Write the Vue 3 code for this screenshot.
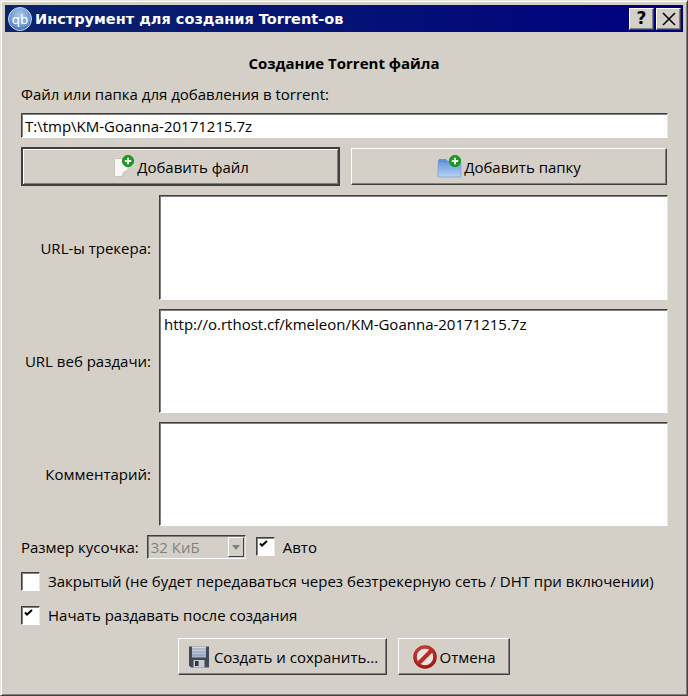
<script setup>
const areas = [
  { label: 'URL-ы трекера:', value: '' },
  { label: 'URL веб раздачи:', value: 'http://o.rthost.cf/kmeleon/KM-Goanna-20171215.7z' },
  { label: 'Комментарий:', value: '' }
]
</script>

<template>
  <div class="window">
    <div class="titlebar">
      <svg class="logo" width="24" height="24" viewBox="0 0 24 24">
        <defs>
          <radialGradient id="lg" cx="50%" cy="35%" r="65%">
            <stop offset="0" stop-color="#a9c6ea" />
            <stop offset="0.7" stop-color="#6f9bd6" />
            <stop offset="1" stop-color="#3f69b0" />
          </radialGradient>
        </defs>
        <circle cx="12" cy="12" r="11.5" fill="url(#lg)" stroke="#c5d6ee" stroke-width="1" />
        <text x="12" y="16.5" text-anchor="middle" class="logo-text">qb</text>
      </svg>
      <span class="title">Инструмент для создания Torrent-ов</span>
      <span class="cap-btn help">?</span>
      <span class="cap-btn close">
        <svg width="14" height="14" viewBox="0 0 14 14"><path d="M1 1L13 13M13 1L1 13" stroke="#000" stroke-width="1.5" fill="none" /></svg>
      </span>
    </div>

    <div class="body">
      <div class="heading">Создание Torrent файла</div>
      <div class="label">Файл или папка для добавления в torrent:</div>
      <div class="sunken input">T:\tmp\KM-Goanna-20171215.7z</div>

      <div class="btn-row">
        <button class="btn wide default">
          <svg width="24" height="24" viewBox="0 0 24 24">
            <path d="M2.5 3.5H16V15L10 21.5H2.5Z" fill="#f7f7f5" stroke="#c9c7c0" />
            <path d="M10 21.5C10.5 17.5 12 16 16 15.5Z" fill="#d2d0ca" stroke="#bdbbb4" stroke-width=".6" />
            <circle cx="16" cy="6" r="5.6" fill="#12a31a" stroke="#0a7c12" stroke-width=".8" />
            <path d="M12.8 6H19.2M16 2.8V9.2" stroke="#fff" stroke-width="2" />
          </svg>
          <span>Добавить файл</span>
        </button>
        <button class="btn wide">
          <svg width="26" height="24" viewBox="0 0 26 24">
            <defs>
              <linearGradient id="fg" x1="0" y1="0" x2="0" y2="1">
                <stop offset="0" stop-color="#6f9de0" />
                <stop offset="1" stop-color="#b6d2f4" />
              </linearGradient>
            </defs>
            <path d="M1.5 6.5C1.5 5 2 4.5 3 4.5H9L11 6.5H21V21.5H1.5Z" fill="#5f8fd6" stroke="#6f94c8" />
            <rect x="1" y="8" width="23" height="14" rx="1" fill="url(#fg)" stroke="#7ea3d6" stroke-width=".8" />
            <circle cx="18" cy="6" r="5.6" fill="#12a31a" stroke="#0a7c12" stroke-width=".8" />
            <path d="M14.8 6H21.2M18 2.8V9.2" stroke="#fff" stroke-width="2" />
          </svg>
          <span>Добавить папку</span>
        </button>
      </div>

      <div v-for="a in areas" :key="a.label" class="area-row">
        <div class="area-label">{{ a.label }}</div>
        <div class="sunken area">{{ a.value }}</div>
      </div>

      <div class="piece-row">
        <span>Размер кусочка:</span>
        <div class="sunken combo">
          <span class="combo-text">32 КиБ</span>
          <span class="combo-arrow"><i></i></span>
        </div>
        <span class="sunken check checked first-check">
          <svg width="9" height="8" viewBox="0 0 9 8"><path d="M1 3.5L3 5.5L8 1" stroke="#000" stroke-width="2" fill="none" /></svg>
        </span>
        <span class="auto">Авто</span>
      </div>

      <div class="check-row private">
        <span class="sunken check"></span>
        <span>Закрытый (не будет передаваться через безтрекерную сеть / DHT при включении)</span>
      </div>
      <div class="check-row seed">
        <span class="sunken check">
          <svg width="9" height="8" viewBox="0 0 9 8"><path d="M1 3.5L3 5.5L8 1" stroke="#000" stroke-width="2" fill="none" /></svg>
        </span>
        <span>Начать раздавать после создания</span>
      </div>

      <div class="actions">
        <button class="btn create">
          <svg width="24" height="24" viewBox="0 0 24 24">
            <defs>
              <linearGradient id="sv" x1="0" y1="0" x2="0" y2="1">
                <stop offset="0" stop-color="#d9dde6" />
                <stop offset="1" stop-color="#9fb0c8" />
              </linearGradient>
            </defs>
            <path d="M2 1.5H22V22.5H4L2 20.5Z" fill="#3f4a56" />
            <rect x="5" y="1.5" width="14" height="11" fill="url(#sv)" />
            <path d="M5 4H19M5 7H19M5 10H19" stroke="#7f93b3" stroke-width=".8" />
            <rect x="6.5" y="15" width="11" height="7.5" fill="#c8ccd0" />
            <rect x="8" y="16" width="3.5" height="5" fill="#2e3740" />
          </svg>
          <span>Создать и сохранить...</span>
        </button>
        <button class="btn cancel">
          <svg width="24" height="24" viewBox="0 0 24 24">
            <defs>
              <radialGradient id="cn" cx="45%" cy="35%" r="70%">
                <stop offset="0" stop-color="#e2605c" />
                <stop offset="1" stop-color="#a01414" />
              </radialGradient>
            </defs>
            <circle cx="12" cy="12" r="10" fill="none" stroke="url(#cn)" stroke-width="3.6" />
            <circle cx="12" cy="12" r="8" fill="#e9e4e0" />
            <path d="M5.5 18.5L18.5 5.5" stroke="#c02a26" stroke-width="4" />
          </svg>
          <span>Отмена</span>
        </button>
      </div>
    </div>
  </div>
</template>

<style scoped>
.window {
  width: 688px;
  height: 696px;
  box-sizing: border-box;
  background: #d4d0c8;
  color: #000;
  font-family: "Open Sans", "Noto Sans", sans-serif;
  font-size: 15px;
  padding: 5px;
  border: 1px solid;
  border-color: #e8e6e1 #404040 #404040 #e8e6e1;
  box-shadow: inset 1px 1px 0 #fff, inset -1px -1px 0 #808080;
  display: flex;
  flex-direction: column;
  overflow: hidden;
}
.titlebar {
  margin: -1px -1px 0;
  height: 27px;
  flex: none;
  box-sizing: border-box;
  display: flex;
  align-items: center;
  padding: 0 2px 0 3px;
  color: #fff;
  background: linear-gradient(90deg, #0a246a 0%, #000080 100%);
}
.logo { flex: none; }
.logo-text {
  font-family: "DejaVu Sans", sans-serif;
  font-size: 13px;
  fill: #fff;
}
.title {
  flex: 1;
  margin-left: 3px;
  font-family: "DejaVu Sans", sans-serif;
  font-weight: 700;
  font-size: 14.5px;
  white-space: nowrap;
}
.cap-btn {
  width: 25px;
  height: 22px;
  box-sizing: border-box;
  background: #d4d0c8;
  border: 1px solid;
  border-color: #fff #404040 #404040 #fff;
  box-shadow: inset -1px -1px 0 #808080;
  color: #000;
  display: flex;
  align-items: center;
  justify-content: center;
}
.help {
  font-family: "DejaVu Sans", sans-serif;
  font-weight: 700;
  font-size: 17px;
  line-height: 1;
}
.close { margin-left: 2px; }
.body {
  flex: 1;
  display: flex;
  flex-direction: column;
  padding: 0 15px;
}
.heading {
  text-align: center;
  font-weight: 700;
  line-height: 20px;
  margin-top: 21px;
}
.label {
  line-height: 20px;
  margin-top: 11px;
}
.sunken {
  box-sizing: border-box;
  background: #fff;
  border: 1px solid;
  border-color: #404040 #e8e6e1 #fff #404040;
  box-shadow: inset 1px 1px 0 #808080;
}
.input {
  height: 25px;
  margin-top: 9px;
  margin-right: -1px;
  line-height: 22px;
  padding: 1px 3px 0;
}
.btn-row {
  display: flex;
  justify-content: space-between;
  align-items: center;
  margin-top: 9px;
  height: 39px;
}
.btn {
  box-sizing: border-box;
  font: inherit;
  color: inherit;
  background: #d4d0c8;
  border: 1px solid;
  border-color: #fff #404040 #404040 #fff;
  box-shadow: inset -1px -1px 0 #808080;
  display: flex;
  align-items: center;
  justify-content: center;
  padding: 0;
}
.wide {
  width: 316px;
  height: 37px;
  gap: 1px;
}
.default {
  width: 319px;
  height: 39px;
  border: 2px solid #404040;
  box-shadow: inset 1px 1px 0 #fff, inset -1px -1px 0 #808080;
}
.area-row {
  display: flex;
  align-items: center;
  margin-top: 9px;
  margin-right: -1px;
  height: 105px;
}
.area-row + .area-row { height: 104px; }
.area-label {
  width: 130px;
  text-align: right;
  flex: none;
}
.area {
  flex: 1;
  height: 100%;
  margin-left: 8px;
  padding: 3px 4px;
  line-height: 22px;
}
.piece-row {
  display: flex;
  align-items: center;
  height: 24px;
  margin-top: 9px;
}
.combo {
  width: 99px;
  height: 24px;
  margin-left: 8px;
  background: #d4d0c8;
  display: flex;
  align-items: center;
  padding: 0 1px 0 3px;
}
.combo-text { flex: 1; color: #808080; }
.combo-arrow {
  width: 16px;
  height: 20px;
  box-sizing: border-box;
  border: 1px solid;
  border-color: #fff #404040 #404040 #fff;
  display: flex;
  align-items: center;
  justify-content: center;
}
.combo-arrow i {
  width: 0;
  height: 0;
  border: 4px solid transparent;
  border-top: 5px solid #808080;
  border-bottom: 0;
}
.check {
  width: 19px;
  height: 19px;
  flex: none;
  display: flex;
  padding: 2px;
}
.check svg { display: block; }
.first-check { margin-left: 10px; margin-top: -2px; }
.auto { margin-left: 8px; }
.check-row {
  display: flex;
  align-items: center;
  gap: 8px;
  white-space: nowrap;
}
.private { margin-top: 12px; }
.seed { margin-top: 14px; }
.actions {
  display: flex;
  justify-content: center;
  gap: 11px;
  margin-top: 13px;
  margin-left: 0;
}
.create { width: 209px; height: 37px; gap: 3px; }
.cancel { width: 112px; height: 37px; gap: 3px; }
</style>
